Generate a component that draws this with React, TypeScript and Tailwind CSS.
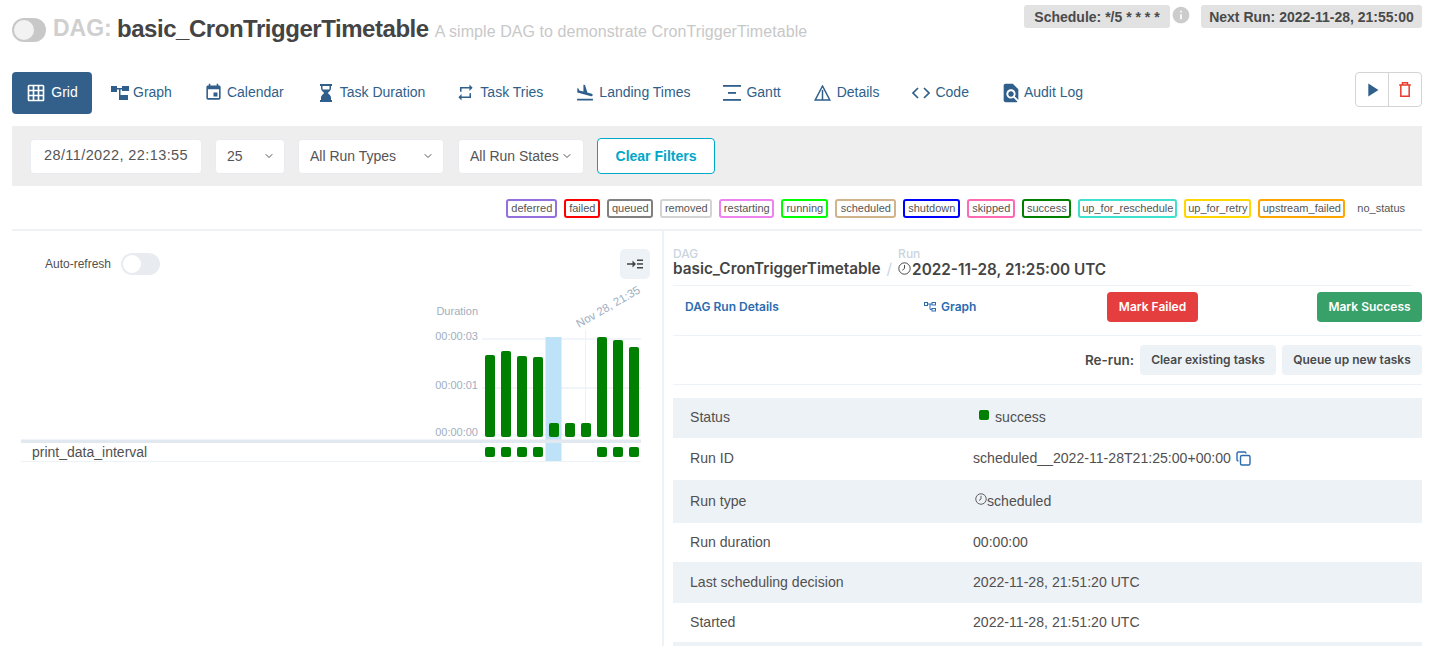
import React from "react";
import { ChevronDown } from "lucide-react";
import {
  MdOutlineGridOn,
  MdEvent,
  MdRepeat,
  MdFlightLand,
  MdFindInPage,
  MdPlayArrow,
  MdInfo,
} from "react-icons/md";

const NAV_ICON = "shrink-0 text-[#2f5f8a]";

const GraphIcon = () => (
  <svg width="18" height="16" viewBox="0 0 18 16" fill="currentColor" className={NAV_ICON}>
    <rect x="0" y="1" width="6" height="6" />
    <rect x="11" y="1" width="7" height="5" />
    <rect x="8" y="10" width="9" height="5" />
    <path d="M6 3h6v1.4H9.5V12H12v1.4H8V4.4H6z" />
  </svg>
);

const HourglassIcon = () => (
  <svg width="14" height="18" viewBox="0 0 14 18" fill="currentColor" className={NAV_ICON}>
    <path d="M1 0h12v2h-1v2.500c0 1.700-2 3.200-3.200 4.500C10 10.300 12 11.800 12 13.500V16h1v2H1v-2h1v-2.500C2 11.800 4 10.300 5.200 9 4 7.700 2 6.200 2 4.500V2H1zm2.500 2v2.500c0 .3.100.6.300.9h6.400c.2-.3.300-.6.300-.9V2z" />
  </svg>
);

const GanttIcon = () => (
  <svg width="18" height="16" viewBox="0 0 18 16" fill="currentColor" className={NAV_ICON}>
    <rect x="0" y="0" width="18" height="1.800" />
    <rect x="5" y="7" width="8" height="1.800" />
    <rect x="0" y="14" width="18" height="1.800" />
  </svg>
);

const DetailsIcon = () => (
  <svg width="17" height="16" viewBox="0 0 17 16" fill="none" stroke="currentColor" strokeWidth="1.500" className={NAV_ICON}>
    <path d="M8.500 1 1.200 15h14.600zM8.500 5v10" />
  </svg>
);

const CodeIcon = () => (
  <svg width="18" height="12" viewBox="0 0 18 12" fill="none" stroke="currentColor" strokeWidth="1.700" className={NAV_ICON}>
    <path d="M6 1 1 6l5 5M12 1l5 5-5 5" />
  </svg>
);

const ClockIcon = ({ size, className }: { size: number; className?: string }) => (
  <svg width={size} height={size} viewBox="0 0 24 24" fill="none" stroke="currentColor" strokeWidth="1.800" className={className}>
    <circle cx="12" cy="12" r="10.500" />
    <path d="M12 5.500V12l-4 3" />
  </svg>
);

const tabs = [
  { label: "Graph", icon: <GraphIcon />, ml: "ml-[19px]", gap: "gap-[4px]" },
  { label: "Calendar", icon: <MdEvent size={19} className={NAV_ICON} />, ml: "ml-[32px]", gap: "gap-[4px]" },
  { label: "Task Duration", icon: <HourglassIcon />, ml: "ml-[35px]", gap: "gap-[7px]" },
  { label: "Task Tries", icon: <MdRepeat size={19} className={NAV_ICON} />, ml: "ml-[31px]", gap: "gap-[5px]" },
  { label: "Landing Times", icon: <MdFlightLand size={20} className={NAV_ICON} />, ml: "ml-[32px]", gap: "gap-[4px]" },
  { label: "Gantt", icon: <GanttIcon />, ml: "ml-[33px]", gap: "gap-[5px]" },
  { label: "Details", icon: <DetailsIcon />, ml: "ml-[33px]", gap: "gap-[6px]" },
  { label: "Code", icon: <CodeIcon />, ml: "ml-[33px]", gap: "gap-[5px]" },
  { label: "Audit Log", icon: <MdFindInPage size={22} className={NAV_ICON} />, ml: "ml-[31px]", gap: "gap-[2px]" },
];

const legend = [
  { label: "deferred", border: "border-[#9370db]", w: "w-[51px]" },
  { label: "failed", border: "border-[#ff0000]", w: "w-[36px]" },
  { label: "queued", border: "border-[#808080]", w: "w-[46px]" },
  { label: "removed", border: "border-[#d3d3d3]", w: "w-[52px]" },
  { label: "restarting", border: "border-[#ee82ee]", w: "w-[55px]" },
  { label: "running", border: "border-[#00ff00]", w: "w-[47px]" },
  { label: "scheduled", border: "border-[#d2b48c]", w: "w-[61px]" },
  { label: "shutdown", border: "border-[#0000ff]", w: "w-[57px]" },
  { label: "skipped", border: "border-[#ff69b4]", w: "w-[48px]" },
  { label: "success", border: "border-[#008000]", w: "w-[49px]" },
  { label: "up_for_reschedule", border: "border-[#40e0d0]", w: "w-[99px]" },
  { label: "up_for_retry", border: "border-[#ffd700]", w: "w-[67px]" },
  { label: "upstream_failed", border: "border-[#ffa500]", w: "w-[87px]" },
];

const bars = [355, 351, 356, 357, 423, 423, 423, 337, 340, 347];
const rowSquares = [0, 1, 2, 3, 7, 8, 9];
const gridLines = [
  { y: 339, label: "00:00:03" },
  { y: 388, label: "00:00:01" },
  { y: 435, label: "00:00:00" },
];

const Chart = () => (
  <svg width="620" height="180" viewBox="21 285 620 180" className="ml-[9px] block overflow-visible">
    <text x="478" y="315" textAnchor="end" fontSize="11" fill="#a0aec0">Duration</text>
    {gridLines.map((g) => (
      <g key={g.y}>
        <line x1="482" x2="641" y1={g.y} y2={g.y} stroke="#edf2f7" strokeWidth="1.500" />
        <text x="478" y={g.y + 1} textAnchor="end" fontSize="11" fill="#a0aec0">{g.label}</text>
      </g>
    ))}
    <rect x="545.500" y="337" width="16" height="125" fill="#bee3f8" />
    <line x1="585.500" x2="585.500" y1="330" y2="435" stroke="#edf2f7" />
    <text x="579" y="328" fontSize="11.500" fill="#a0aec0" transform="rotate(-30 579 328)">Nov 28, 21:35</text>
    {bars.map((top, i) => (
      <rect key={i} x={485 + i * 16} y={top} width="10" height={437 - top} rx="2" fill="#008000" />
    ))}
    <rect x="21" y="439.500" width="620" height="3.500" fill="#e2e8f0" />
    <line x1="21" x2="641" y1="461.500" y2="461.500" stroke="#edf2f7" />
    <rect x="545.500" y="439.500" width="16" height="3.500" fill="#e2e8f0" />
    {rowSquares.map((i) => (
      <rect key={i} x={485 + i * 16} y="447" width="10" height="10" rx="2" fill="#008000" />
    ))}
    <text x="32" y="457" fontSize="14" fill="#51504f">print_data_interval</text>
  </svg>
);

const Select = ({ label, w, pr }: { label: string; w: string; pr: string }) => (
  <div className={`flex items-center justify-between h-[35px] pl-[11px] ${pr} ${w} bg-white rounded-[4px] border border-[#e8ecf0] text-[14px] text-[#555]`}>
    <span className="whitespace-nowrap">{label}</span>
    <ChevronDown size={12} strokeWidth={2} className="shrink-0 text-[#555]" />
  </div>
);

const detailRows = [
  { h: "h-[40px]", bg: "bg-[#edf2f7]", label: "Status" },
  { h: "h-[42px]", bg: "bg-white", label: "Run ID" },
  { h: "h-[43px]", bg: "bg-[#edf2f7]", label: "Run type" },
  { h: "h-[39px]", bg: "bg-white", label: "Run duration" },
  { h: "h-[41px]", bg: "bg-[#edf2f7]", label: "Last scheduling decision" },
  { h: "h-[39px]", bg: "bg-white", label: "Started" },
];

const DetailValue = ({ label }: { label: string }) => {
  if (label === "Status") {
    return (
      <span className="flex items-center">
        <span className="w-[10px] h-[10px] rounded-[2px] bg-[#008000] ml-[6px] mr-[6px] -mt-[5px]" />
        success
      </span>
    );
  }
  if (label === "Run ID") {
    return (
      <span className="flex items-center">
        scheduled__2022-11-28T21:25:00+00:00
        <svg width="15" height="15" viewBox="0 0 15 15" fill="none" stroke="#2b6cb0" strokeWidth="1.400" className="ml-[5px]">
          <rect x="4.500" y="4.500" width="9.500" height="9.500" rx="1.500" />
          <path d="M2.500 10C1.500 10 1 9.400 1 8.500V2.500C1 1.600 1.600 1 2.500 1h6c.9 0 1.500.5 1.500 1.500" />
        </svg>
      </span>
    );
  }
  if (label === "Run type") {
    return (
      <span className="flex items-center">
        <ClockIcon size={12} className="ml-[2px] text-[#51504f] -mt-[4px]" />
        scheduled
      </span>
    );
  }
  if (label === "Run duration") return <span>00:00:00</span>;
  return <span>2022-11-28, 21:51:20 UTC</span>;
};

export default function App() {
  return (
    <div className="h-[646px] w-[1437px] overflow-hidden bg-white font-['Liberation_Sans',sans-serif] text-[#51504f]">
      <div className="pl-[12px] pr-[15px]">
        {/* title */}
        <div className="flex justify-between h-[72px]">
          <div className="flex items-center h-[58px] pt-[1px]">
            <div className="w-[34px] h-[24px] rounded-full bg-[#c8c8c8] p-[2px]">
              <div className="w-[20px] h-[20px] rounded-full bg-[#f2f2f2]" />
            </div>
            <span className="ml-[7px] w-[57px] -mt-[2px] whitespace-nowrap text-[23px] font-bold text-[#cfcfcf]">DAG:</span>
            <span className="ml-[7px] -mt-[2px] text-[24px] font-bold text-[#444] tracking-[-0.46px]">basic_CronTriggerTimetable</span>
            <span className="ml-[6px] mt-[4px] text-[16px] tracking-[0.06px] text-[#c8c8c8]">A simple DAG to demonstrate CronTriggerTimetable</span>
          </div>
          <div className="flex items-start pt-[5px] text-[14px] font-bold text-[#4a4a4a]">
            <div className="flex items-center h-[23px] w-[146px] justify-center pt-[1px] rounded-[3px] bg-[#e2e2e2]">Schedule: */5 * * * *</div>
            <MdInfo size={20} className="ml-[1px] text-[#cccccc]" />
            <div className="flex items-center h-[23px] w-[221px] justify-center pt-[1px] rounded-[3px] bg-[#e2e2e2] ml-[10px]">Next Run: 2022-11-28, 21:55:00</div>
          </div>
        </div>

        {/* tabs */}
        <div className="flex items-start justify-between h-[54px]">
          <div className="flex items-center h-[42px] text-[14px] text-[#2f5f8a]">
            <div className="flex items-center justify-center gap-[5px] w-[80px] h-[42px] pb-[1px] rounded-[4px] bg-[#33608a] text-white">
              <MdOutlineGridOn size={20} />
              Grid
            </div>
            {tabs.map((t) => (
              <div key={t.label} className={`flex items-center ${t.ml} ${t.gap} -mt-[1px]`}>
                {t.icon}
                {t.label}
              </div>
            ))}
          </div>
          <div className="flex h-[35px] w-[67px] rounded-[4px] border border-[#d4d4d4]">
            <div className="flex flex-1 items-center justify-center border-r border-[#d4d4d4]">
              <MdPlayArrow size={22} className="text-[#2f5f8a]" />
            </div>
            <div className="flex flex-1 items-center justify-center">
              <svg width="12" height="15" viewBox="0 0 14 18" fill="none" stroke="#e8392c" strokeWidth="1.800">
                <path d="M0 3.500h14M4 3.500V1h6v2.500M2 3.500V17h10V3.500" />
              </svg>
            </div>
          </div>
        </div>

        {/* filters */}
        <div className="flex items-center h-[60px] bg-[#eeeeee] pl-[18px]">
          <div className="flex items-center justify-center h-[35px] w-[172px] bg-white rounded-[4px] border border-[#e8ecf0] text-[14.500px] text-[#555] tracking-[0.4px]">
            28/11/2022, 22:13:55
          </div>
          <div className="ml-[13px]"><Select label="25" w="w-[70px]" pr="pr-[9px]" /></div>
          <div className="ml-[13px]"><Select label="All Run Types" w="w-[146px]" pr="pr-[9px]" /></div>
          <div className="ml-[14px]"><Select label="All Run States" w="w-[126px]" pr="pr-[10px]" /></div>
          <div className="ml-[13px] flex items-center justify-center h-[36px] w-[118px] rounded-[4px] border border-[#00a7c9] bg-white text-[14px] font-bold text-[#00a7c9]">
            Clear Filters
          </div>
        </div>

        {/* legend */}
        <div className="flex items-center justify-end gap-[7px] h-[45px] pr-[17px] pt-[1px] border-b-2 border-[#edf2f7] text-[11px] text-[#555]">
          {legend.map((l) => (
            <div key={l.label} className={`flex items-center justify-center h-[19px] ${l.w} rounded-[3px] border-2 ${l.border}`}>
              {l.label}
            </div>
          ))}
          <div className="ml-[5px]">no_status</div>
        </div>

        {/* body */}
        <div className="flex">
          <div className="w-[650px] shrink-0 pt-[18px]">
            <div className="flex items-center justify-between h-[30px]">
              <div className="flex items-center pl-[33px] text-[12px] text-[#51504f]">
                Auto-refresh
                <div className="ml-[10px] w-[39px] h-[22px] rounded-full bg-[#e8ecf1] p-[2px]">
                  <div className="w-[18px] h-[18px] rounded-full bg-white" />
                </div>
              </div>
              <div className="flex items-center justify-center w-[30px] h-[30px] mr-[12px] rounded-[5px] bg-[#edf2f7]">
                <svg width="16" height="10" viewBox="0 0 16 10" fill="#444">
                  <path d="M0 4.200h5.500V1.500L9 5 5.500 8.500V5.800H0z" />
                  <rect x="10" y="0.500" width="6" height="1.500" />
                  <rect x="10" y="4.200" width="6" height="1.500" />
                  <rect x="10" y="8" width="6" height="1.500" />
                </svg>
              </div>
            </div>
            <div className="mt-[6px]"><Chart /></div>
          </div>

          <div className="flex-1 min-w-0 h-[420px] border-l-2 border-[#edf2f7] pl-[9px] pt-[18px]">
            {/* breadcrumb */}
            <div className="flex items-start h-[37px] border-b border-[#edf2f7] mr-[10px] font-['Inter',sans-serif] text-[15.300px] font-semibold text-[#444] leading-[14px]">
              <div>
                <div className="text-[12px] leading-[10px] font-medium text-[#cbd5e0]">DAG</div>
                <div className="mt-[3px]">basic_CronTriggerTimetable</div>
              </div>
              <span className="ml-[6px] mt-[13px] font-normal text-[#cbd5e0]">/</span>
              <div className="ml-[6px]">
                <div className="text-[12px] leading-[10px] font-medium text-[#cbd5e0]">Run</div>
                <div className="flex items-center mt-[3px]">
                  <ClockIcon size={13} className="mb-[3px] mr-[1px] text-[#444]" />
                  2022-11-28, 21:25:00 UTC
                </div>
              </div>
            </div>

            {/* actions */}
            <div className="flex items-center h-[50px] border-b border-[#edf2f7] font-['Inter',sans-serif] text-[12px] font-semibold pb-[7px]">
              <span className="ml-[12px] w-[239px] text-[#2b6cb0]">DAG Run Details</span>
              <span className="flex items-center w-[183px] text-[#2b6cb0]">
                <svg width="12" height="10" viewBox="0 0 12 10" fill="none" stroke="#2b6cb0" strokeWidth="1" className="mr-[5px]">
                  <rect x="0.500" y="0.500" width="3" height="3" />
                  <rect x="8" y="0.500" width="3.500" height="2.500" />
                  <rect x="8" y="6.500" width="3.500" height="2.500" />
                  <path d="M3.500 2H8M6 2v5.500h2" />
                </svg>
                Graph
              </span>
              <span className="flex items-center justify-center h-[30px] w-[91px] rounded-[4px] bg-[#e53e3e] text-white">Mark Failed</span>
              <span className="flex items-center justify-center h-[30px] w-[105px] ml-auto rounded-[4px] bg-[#38a169] text-white">Mark Success</span>
            </div>

            {/* re-run */}
            <div className="flex items-center justify-end h-[49px] border-b border-[#edf2f7] font-['Inter',sans-serif] font-semibold text-[12px] text-[#4a4a4a]">
              <span className="text-[13.500px] mr-[6px]">Re-run:</span>
              <span className="flex items-center justify-center h-[30px] w-[136px] rounded-[4px] bg-[#edf2f7]">Clear existing tasks</span>
              <span className="flex items-center justify-center h-[30px] w-[140px] ml-[6px] rounded-[4px] bg-[#edf2f7]">Queue up new tasks</span>
            </div>

            {/* run details */}
            <div className="mt-[13px] text-[14.100px] text-[#51504f]">
              {detailRows.map((r) => (
                <div key={r.label} className={`flex items-center ${r.h} ${r.bg}`}>
                  <span className="w-[300px] pl-[17px]">{r.label}</span>
                  <DetailValue label={r.label} />
                </div>
              ))}
              <div className="h-[20px] bg-[#edf2f7]" />
            </div>
          </div>
        </div>
      </div>
    </div>
  );
}
